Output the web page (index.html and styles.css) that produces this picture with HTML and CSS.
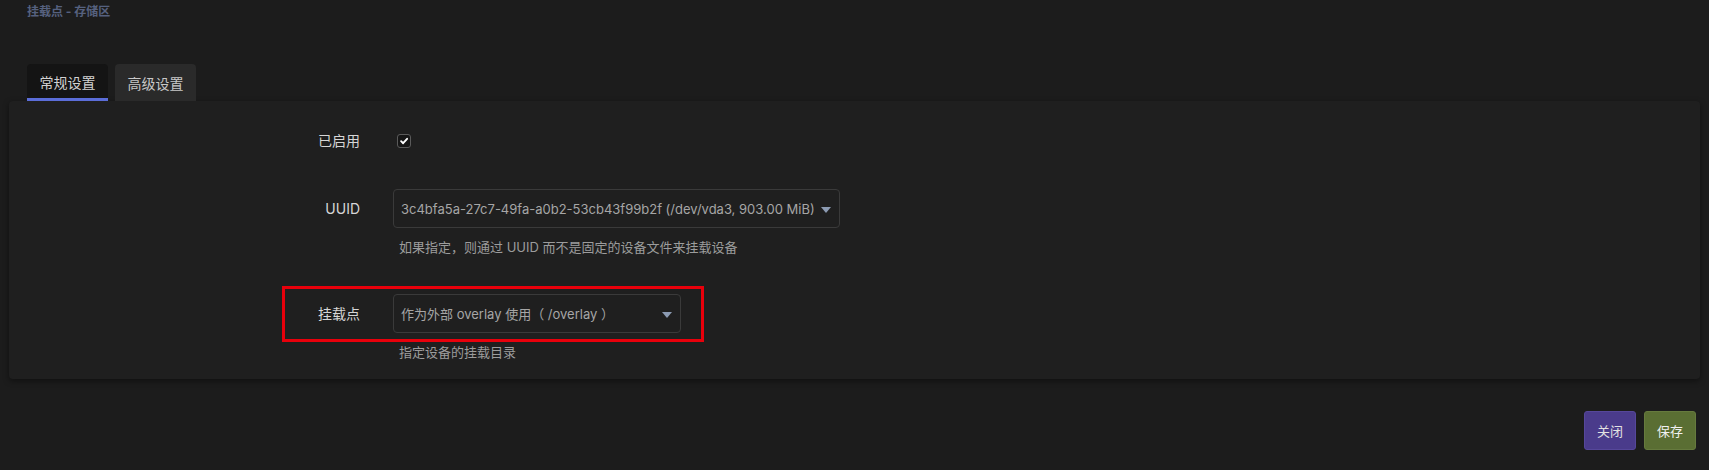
FILE: index.html
```html
<!DOCTYPE html>
<html lang="zh-CN">
<head>
<meta charset="utf-8">
<title>挂载点 - 存储区</title>
<link rel="stylesheet" href="styles.css">
</head>
<body>
<div class="page">
  <div class="title">挂载点 - 存储区</div>
  <div class="tabs">
    <div class="tab active">常规设置</div>
    <div class="tab">高级设置</div>
  </div>
  <div class="panel">
    <div class="row row-enabled">
      <div class="label">已启用</div>
      <div class="field">
        <span class="checkbox">
          <svg viewBox="0 0 14 14" width="14" height="14"><path d="M3.6 7.2 L6 9.6 L10.6 4.4" fill="none" stroke="#ffffff" stroke-width="2.2" stroke-linecap="round" stroke-linejoin="round"/></svg>
        </span>
      </div>
    </div>
    <div class="row row-uuid">
      <div class="label">UUID</div>
      <div class="field">
        <div class="select select-wide">
          <span class="select-text">3c4bfa5a-27c7-49fa-a0b2-53cb43f99b2f (/dev/vda3, 903.00 MiB)</span>
          <span class="arrow"></span>
        </div>
        <div class="desc">如果指定，则通过 UUID 而不是固定的设备文件来挂载设备</div>
      </div>
    </div>
    <div class="row row-mount">
      <div class="highlight"></div>
      <div class="label">挂载点</div>
      <div class="field">
        <div class="select select-narrow">
          <span class="select-text">作为外部 overlay 使用（ /overlay ）</span>
          <span class="arrow"></span>
        </div>
        <div class="desc">指定设备的挂载目录</div>
      </div>
    </div>
  </div>
  <div class="actions">
    <button class="btn btn-close">关闭</button>
    <button class="btn btn-save">保存</button>
  </div>
</div>
</body>
</html>
```
FILE: styles.css
```css
html, body {
  margin: 0;
  padding: 0;
  background: #1c1c1c;
  font-family: "Inter", "Noto Sans CJK SC", "Noto Sans", sans-serif;
  color: #cfcfcf;
}

.page {
  padding: 2px 9px 0 9px;
  height: 468px;
}

.title {
  margin-left: 18px;
  font-size: 12px;
  line-height: 20px;
  font-weight: 700;
  color: #56617f;
}

.tabs {
  display: flex;
  gap: 7px;
  margin: 42px 0 0 18px;
}

.tab {
  width: 81px;
  height: 37px;
  box-sizing: border-box;
  display: flex;
  align-items: center;
  justify-content: center;
  font-size: 14px;
  color: #c8c8c8;
  background: #2a2a2a;
  border-radius: 4px 4px 0 0;
}

.tab.active {
  background: #141414;
  border-bottom: 3px solid #5b6dd8;
  padding-top: 2px;
  color: #d2d2d2;
}

.panel {
  background: #1f1f1f;
  border-radius: 4px;
  box-shadow: 0 2px 6px rgba(0, 0, 0, 0.45);
  padding: 20px 0 17px 0;
}

.row {
  display: flex;
  align-items: flex-start;
  position: relative;
}

.row-enabled {
  margin-bottom: 29px;
}

.row-uuid {
  margin-bottom: 37px;
}

.label {
  width: 384px;
  flex: none;
  padding-right: 33px;
  box-sizing: border-box;
  text-align: right;
  font-size: 14px;
  line-height: 39px;
  color: #d6d6d6;
}

.field {
  display: flex;
  flex-direction: column;
}

.row-enabled .field {
  height: 39px;
  justify-content: center;
}

.checkbox {
  width: 14px;
  height: 14px;
  box-sizing: border-box;
  margin-left: 4px;
  border: 1px solid #5a5a5a;
  border-radius: 3px;
  background: #161616;
  display: flex;
  align-items: center;
  justify-content: center;
}

.checkbox svg {
  display: block;
}

.select {
  height: 39px;
  box-sizing: border-box;
  border: 1px solid #3a3a3a;
  border-radius: 4px;
  background: #1f1f1f;
  display: flex;
  align-items: center;
  justify-content: space-between;
  padding: 0 7px 0 7px;
}

.select-wide {
  width: 447px;
}

.select-narrow {
  width: 288px;
}

.select-text {
  font-size: 13px;
  color: #a6a6a6;
  white-space: nowrap;
}

.arrow {
  width: 0;
  height: 0;
  border-left: 5px solid transparent;
  border-right: 5px solid transparent;
  border-top: 6px solid #8c9bb3;
  margin-right: 1px;
  margin-top: 2px;
}

.desc {
  margin-top: 9px;
  margin-left: 6px;
  font-size: 13px;
  line-height: 20px;
  color: #9c9c9c;
}

.highlight {
  position: absolute;
  left: 273px;
  top: -8px;
  width: 422px;
  height: 56px;
  box-sizing: border-box;
  border: 3px solid #e8000b;
  pointer-events: none;
}

.actions {
  display: flex;
  justify-content: flex-end;
  gap: 8px;
  margin-top: 32px;
  padding-right: 4px;
}

.btn {
  width: 52px;
  height: 39px;
  border-radius: 3px;
  font-family: "Inter", "Noto Sans CJK SC", sans-serif;
  font-size: 13px;
  color: #e2e2e2;
  padding: 0;
  cursor: pointer;
}

.btn-close {
  background: #4a3b8b;
  border: 1px solid #56479a;
}

.btn-save {
  background: #5a6e33;
  border: 1px solid #667a3e;
  color: #f0f0f0;
}
```
